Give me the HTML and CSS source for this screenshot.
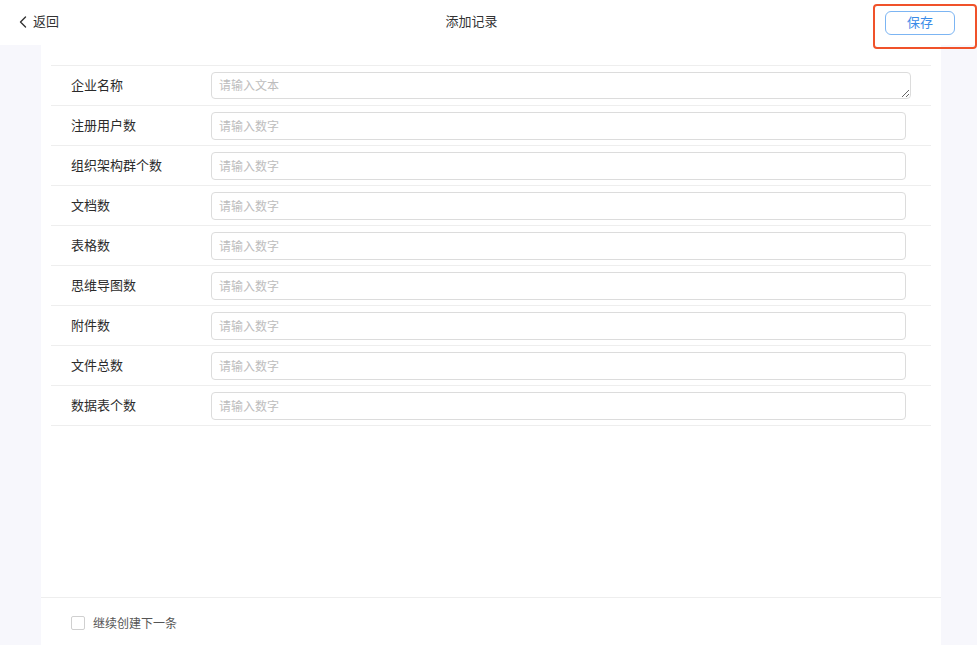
FILE: index.html
```html
<!DOCTYPE html>
<html lang="zh">
<head>
<meta charset="utf-8">
<title>添加记录</title>
<link rel="stylesheet" href="styles.css">
</head>
<body>
<div class="page">
  <header class="topbar">
    <div class="back">
      <svg class="chev" width="8" height="12" viewBox="0 0 8 12"><path d="M6.5 1 L1.5 6 L6.5 11" fill="none" stroke="#333" stroke-width="1.4" stroke-linecap="round" stroke-linejoin="round"/></svg>
      <span class="back-text">返回</span>
    </div>
    <div class="title">添加记录</div>
    <div class="actions">
      <button class="save">保存</button>
      <div class="highlight"></div>
    </div>
  </header>
  <main class="body">
    <section class="panel">
      <div class="form">
        <div class="row"><label class="lbl">企业名称</label><div class="field wide"><textarea class="ta" placeholder="请输入文本"></textarea></div></div>
        <div class="row"><label class="lbl">注册用户数</label><div class="field"><input class="inp" placeholder="请输入数字"></div></div>
        <div class="row"><label class="lbl">组织架构群个数</label><div class="field"><input class="inp" placeholder="请输入数字"></div></div>
        <div class="row"><label class="lbl">文档数</label><div class="field"><input class="inp" placeholder="请输入数字"></div></div>
        <div class="row"><label class="lbl">表格数</label><div class="field"><input class="inp" placeholder="请输入数字"></div></div>
        <div class="row"><label class="lbl">思维导图数</label><div class="field"><input class="inp" placeholder="请输入数字"></div></div>
        <div class="row"><label class="lbl">附件数</label><div class="field"><input class="inp" placeholder="请输入数字"></div></div>
        <div class="row"><label class="lbl">文件总数</label><div class="field"><input class="inp" placeholder="请输入数字"></div></div>
        <div class="row last"><label class="lbl">数据表个数</label><div class="field"><input class="inp" placeholder="请输入数字"></div></div>
      </div>
      <footer class="foot">
        <span class="cb"></span>
        <span class="cb-text">继续创建下一条</span>
      </footer>
    </section>
  </main>
</div>
</body>
</html>
```
FILE: styles.css
```css
* { box-sizing: border-box; }
html, body { margin: 0; padding: 0; }
body {
  font-family: "Noto Sans CJK SC", "Noto Sans", "Liberation Sans", sans-serif;
  color: #333;
  background: #f7f7fc;
  width: 977px;
  height: 645px;
  overflow: hidden;
}
.page { display: flex; flex-direction: column; height: 645px; }
.topbar {
  height: 45px;
  background: #fff;
  display: flex;
  align-items: center;
  position: relative;
  padding-bottom: 3px;
}
.back {
  width: 58px;
  flex: none;
  padding-left: 19px;
  display: flex;
  align-items: center;
  gap: 6px;
  font-size: 13px;
  color: #333;
  line-height: 18px;
  white-space: nowrap;
}
.chev { display: block; flex: none; margin-top: 1px; }
.back-text { flex: none; }
.title {
  flex: 1;
  text-align: center;
  font-size: 13px;
  color: #333;
  line-height: 18px;
}
.actions {
  width: 92px;
  flex: none;
  display: flex;
  align-items: center;
}
.save {
  width: 70px;
  height: 24px;
  border: 1px solid #7cb5f3;
  border-radius: 6px;
  background: #fff;
  color: #3b8ce8;
  font-family: inherit;
  font-size: 13px;
  line-height: 18px;
  padding: 0 0 2px;
  margin-top: 3px;
}
.highlight {
  position: absolute;
  left: 873px;
  top: 4px;
  width: 104px;
  height: 45px;
  border: 2px solid #f0522a;
  border-radius: 4px;
  pointer-events: none;
}
.body {
  flex: 1;
  display: flex;
  padding-left: 41px;
  padding-right: 36px;
}
.panel {
  flex: 1;
  background: #fff;
  display: flex;
  flex-direction: column;
  padding-top: 20px;
}
.form {
  flex: 1;
  margin: 0 10px;
}
.row {
  height: 40px;
  border-top: 1px solid #eeeeee;
  display: flex;
  align-items: center;
  padding-left: 20px;
}
.row.last { border-bottom: 1px solid #eeeeee; height: 41px; }
.lbl {
  width: 140px;
  flex: none;
  font-size: 13px;
  color: #2b2b2b;
  line-height: 18px;
  padding-bottom: 1px;
}
.field { flex: 1; padding-right: 25px; display: flex; }
.field.wide { padding-right: 20px; }
.inp, .ta {
  width: 100%;
  height: 28px;
  border: 1px solid #dcdcdc;
  border-radius: 4px;
  padding: 0 7px 1px;
  font-family: inherit;
  font-size: 12px;
  color: #333;
  background: #fff;
  outline: none;
}
.ta {
  height: 27px;
  margin-top: -1px;
  resize: vertical;
  line-height: 17px;
  padding-top: 3px;
  display: block;
}
.inp::placeholder, .ta::placeholder { color: #bdbdbd; }
.foot {
  height: 48px;
  border-top: 1px solid #eeeeee;
  display: flex;
  align-items: center;
  padding-left: 30px;
  gap: 8px;
}
.cb {
  width: 14px;
  height: 14px;
  border: 1px solid #d0d0d0;
  border-radius: 2px;
  background: #fff;
  margin-top: 3px;
}
.cb-text {
  font-size: 12px;
  color: #555;
  line-height: 18px;
  margin-top: 2px;
}
```
